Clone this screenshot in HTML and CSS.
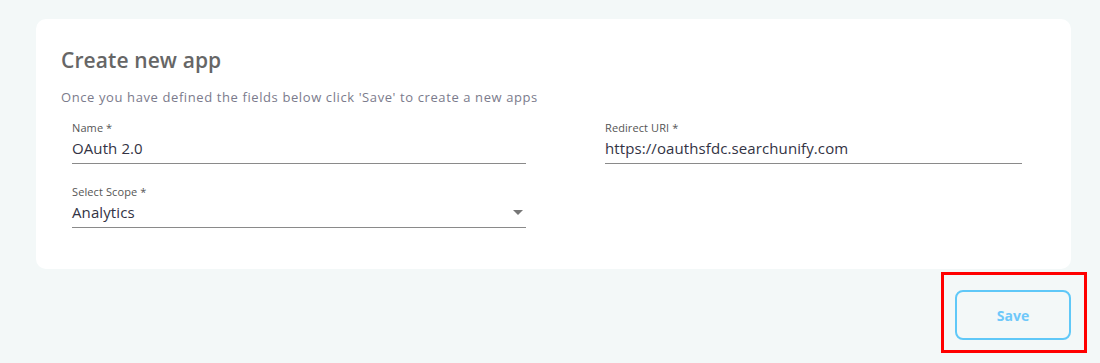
FILE: index.html
```html
<!DOCTYPE html>
<html lang="en">
<head>
    <meta charset="UTF-8">
    <meta name="viewport" content="width=device-width, initial-scale=1.0">
    <title>Create new app</title>
    <link rel="stylesheet" href="styles.css">
</head>
<body>
    <div class="page">
        <!-- Formulario -->
        <div class="app-card">
            <h2 class="app-title">Create new app</h2>
            <p class="app-subtitle">Once you have defined the fields below click 'Save' to create a new apps</p>

            <div class="app-fields">
                <div class="field">
                    <label class="field-label">Name *</label>
                    <div class="field-input">OAuth 2.0</div>
                </div>
                <div class="field">
                    <label class="field-label">Redirect URI *</label>
                    <div class="field-input">https://oauthsfdc.searchunify.com</div>
                </div>
                <div class="field">
                    <label class="field-label">Select Scope *</label>
                    <div class="field-input field-select">
                        <span>Analytics</span>
                        <span class="select-arrow"></span>
                    </div>
                </div>
            </div>
        </div>

        <!-- Acciones -->
        <div class="app-actions">
            <div class="highlight">
                <button class="btn-save">Save</button>
            </div>
        </div>
    </div>
</body>
</html>
```

FILE: styles.css
```css
* {
    box-sizing: border-box;
}

body {
    margin: 0;
    background: #f3f8f8;
    font-family: "Open Sans", "Noto Sans", sans-serif;
}

.page {
    padding: 19px 29px 0 36px;
}

.app-card {
    background: #ffffff;
    border-radius: 10px;
    height: 250px;
    padding: 28px 25px 0 25px;
}

.app-title {
    margin: 0;
    font-size: 21px;
    line-height: 26px;
    font-weight: 600;
    letter-spacing: 0.1px;
    color: #666666;
}

.app-subtitle {
    margin: 15px 0 0 0;
    font-size: 13px;
    line-height: 18px;
    letter-spacing: 0.6px;
    color: #7b7b8c;
}

.app-fields {
    display: grid;
    grid-template-columns: 454px 417px;
    column-gap: 79px;
    row-gap: 21px;
    padding: 15px 0 0 11px;
}

.field-label {
    display: block;
    font-size: 11px;
    line-height: 14px;
    letter-spacing: 0.1px;
    color: #555555;
}

.field-input {
    font-size: 15px;
    line-height: 20px;
    letter-spacing: 0.1px;
    color: #333344;
    padding: 3px 0 5px 0;
    border-bottom: 1px solid #8a8a8a;
}

.field-select {
    display: flex;
    justify-content: space-between;
    align-items: center;
}

.select-arrow {
    width: 0;
    height: 0;
    margin-right: 3px;
    border-left: 5px solid transparent;
    border-right: 5px solid transparent;
    border-top: 5px solid #777777;
}

.app-actions {
    display: flex;
    justify-content: flex-end;
    margin-top: 3px;
    margin-right: -16px;
}

.highlight {
    border: 3px solid #ff0000;
    padding: 15px 13px 10px 11px;
}

.btn-save {
    width: 116px;
    height: 50px;
    background: transparent;
    border: 2px solid #5fc8f8;
    border-radius: 8px;
    font-family: inherit;
    font-size: 14px;
    font-weight: 700;
    color: #6ec8fa;
    cursor: pointer;
}
```
